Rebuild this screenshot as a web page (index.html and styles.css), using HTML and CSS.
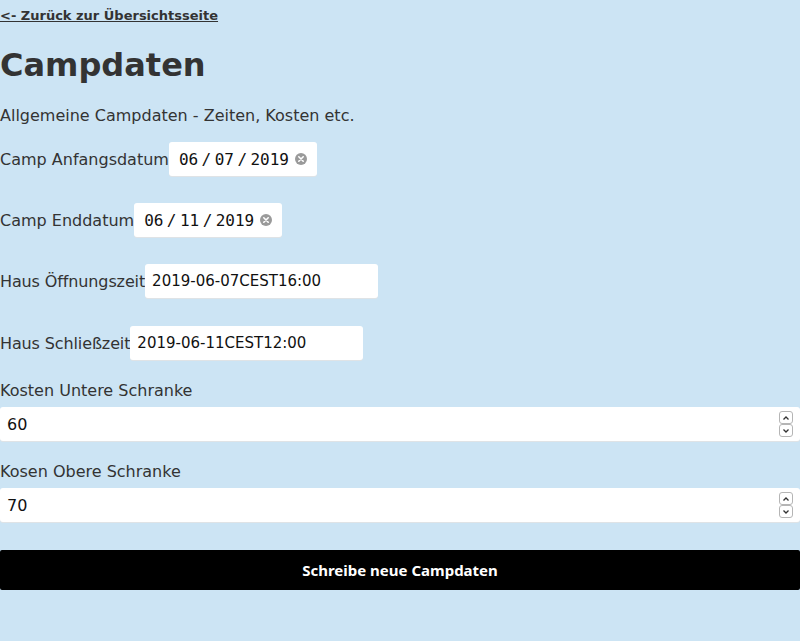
FILE: index.html
```html
<!DOCTYPE html>
<html lang="de">
<head>
<meta charset="utf-8">
<title>Campdaten</title>
<link rel="stylesheet" href="styles.css">
</head>
<body>
<a class="back" href="#">&lt;- Zurück zur Übersichtsseite</a>
<h1 class="title">Campdaten</h1>
<p class="intro">Allgemeine Campdaten - Zeiten, Kosten etc.</p>
<form class="form">
  <div class="row"><label class="lbl">Camp Anfangsdatum</label><div class="box date"><span class="seg">06</span><span class="sep">/</span><span class="seg">07</span><span class="sep">/</span><span class="seg">2019</span><span class="clear"><svg viewBox="0 0 12 12" width="12" height="12"><circle cx="6" cy="6" r="6" fill="#9a9a9a"/><path d="M3.8 3.8L8.2 8.2M8.2 3.8L3.8 8.2" stroke="#fff" stroke-width="1.6" stroke-linecap="round"/></svg></span></div></div>
  <div class="row"><label class="lbl">Camp Enddatum</label><div class="box date"><span class="seg">06</span><span class="sep">/</span><span class="seg">11</span><span class="sep">/</span><span class="seg">2019</span><span class="clear"><svg viewBox="0 0 12 12" width="12" height="12"><circle cx="6" cy="6" r="6" fill="#9a9a9a"/><path d="M3.8 3.8L8.2 8.2M8.2 3.8L3.8 8.2" stroke="#fff" stroke-width="1.6" stroke-linecap="round"/></svg></span></div></div>
  <div class="row"><label class="lbl tight">Haus Öffnungszeit</label><div class="box text">2019-06-07CEST16:00</div></div>
  <div class="row"><label class="lbl tight">Haus Schließzeit</label><div class="box text">2019-06-11CEST12:00</div></div>
  <label class="lbl block">Kosten Untere Schranke</label>
  <div class="box num"><span class="val">60</span><span class="spin"><span class="sb"><svg viewBox="0 0 8 6" width="8" height="6"><path d="M1.5 4.5L4 2L6.5 4.5" fill="none" stroke="#333" stroke-width="1.3"/></svg></span><span class="sb"><svg viewBox="0 0 8 6" width="8" height="6"><path d="M1.5 1.5L4 4L6.5 1.5" fill="none" stroke="#333" stroke-width="1.3"/></svg></span></span></div>
  <label class="lbl block">Kosen Obere Schranke</label>
  <div class="box num last"><span class="val">70</span><span class="spin"><span class="sb"><svg viewBox="0 0 8 6" width="8" height="6"><path d="M1.5 4.5L4 2L6.5 4.5" fill="none" stroke="#333" stroke-width="1.3"/></svg></span><span class="sb"><svg viewBox="0 0 8 6" width="8" height="6"><path d="M1.5 1.5L4 4L6.5 1.5" fill="none" stroke="#333" stroke-width="1.3"/></svg></span></span></div>
  <button class="submit" type="button">Schreibe neue Campdaten</button>
</form>
</body>
</html>
```
FILE: styles.css
```css
html, body {
  margin: 0;
  padding: 0;
  background: #cce4f4;
}
body {
  font-family: "DejaVu Sans", sans-serif;
  font-size: 16px;
  color: #333;
  height: 641px;
}
.back {
  display: block;
  padding-top: 8px;
  font-size: 13px;
  line-height: 15px;
  font-weight: bold;
  color: #333;
  text-decoration: underline;
}
.title {
  margin: 24px 0 0;
  font-size: 32px;
  line-height: 37px;
  font-weight: bold;
  color: #333;
}
.intro {
  margin: 22px 0 0;
  line-height: 19px;
}
.form {
  margin: 17px 0 0;
  display: flex;
  flex-direction: column;
  align-items: flex-start;
}
.row {
  display: flex;
  align-items: center;
  height: 34px;
  margin-bottom: 27px;
}
.row:nth-child(3) {
  margin-bottom: 28px;
}
.row:nth-child(4) {
  margin-bottom: 21px;
}
.lbl {
  line-height: 19px;
  white-space: nowrap;
}
.lbl.tight {
  letter-spacing: -0.12px;
}
.lbl.block {
  display: block;
  margin-bottom: 7px;
}
.box {
  box-sizing: border-box;
  height: 34px;
  background: #fff;
  border-radius: 3px;
  box-shadow: 0 1px 0 #dfe3e6;
  display: flex;
  align-items: center;
  color: #111;
}
.date {
  width: 148px;
  padding-left: 10px;
  font-family: "DejaVu Sans Mono", monospace;
  font-size: 16px;
}
.seg { display: inline-block; }
.sep {
  display: inline-block;
  width: 16.5px;
  text-align: center;
}
.clear {
  display: flex;
  margin-left: 6px;
}
.text {
  width: 233px;
  padding-left: 7px;
  font-size: 15px;
}
.num {
  width: 100%;
  padding: 0 7px;
  justify-content: space-between;
  margin-bottom: 21px;
}
.num.last {
  margin-bottom: 28px;
}
.spin {
  display: flex;
  flex-direction: column;
}
.sb {
  box-sizing: border-box;
  width: 14px;
  height: 13px;
  border: 1px solid #b5b5b5;
  border-radius: 3px;
  display: flex;
  align-items: center;
  justify-content: center;
  background: #fff;
}
.submit {
  width: 100%;
  height: 40px;
  background: #000;
  color: #fff;
  border: none;
  border-radius: 2px;
  font-family: "Noto Sans", sans-serif;
  font-weight: bold;
  font-size: 15px;
  cursor: pointer;
}
```
